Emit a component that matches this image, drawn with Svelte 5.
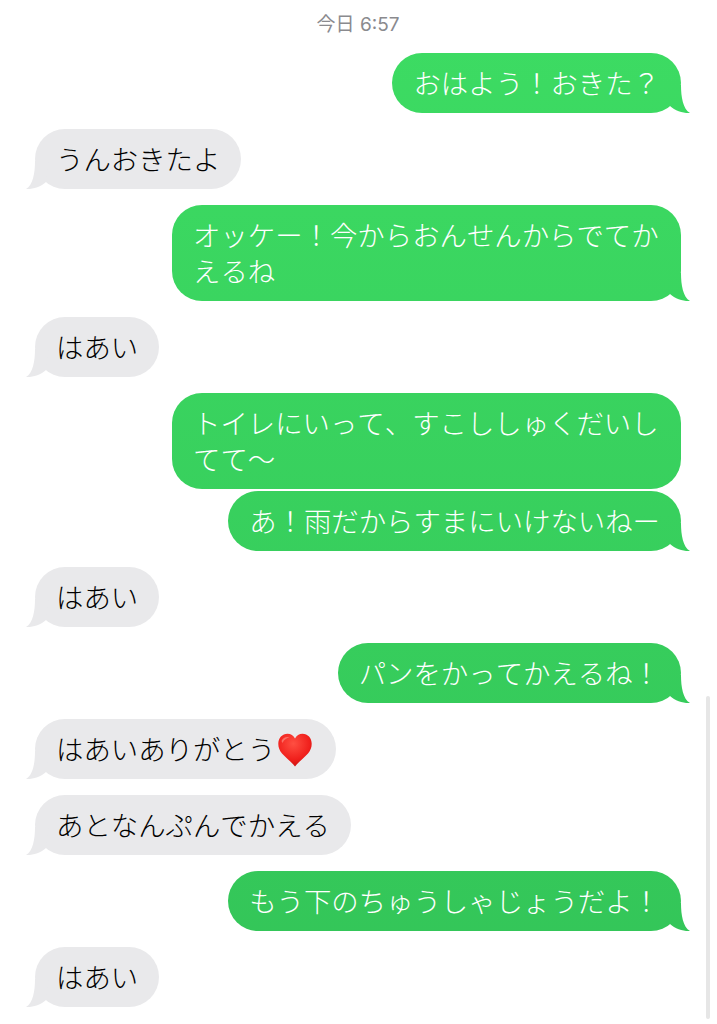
<script>
const messages = [
    { from: 'me', text: 'おはよう！おきた？' },
    { from: 'them', text: 'うんおきたよ' },
    { from: 'me', text: 'オッケー！今からおんせんからでてかえるね' },
    { from: 'them', text: 'はあい' },
    { from: 'me', text: 'トイレにいって、すこししゅくだいしてて〜', noTail: true },
    { from: 'me', text: 'あ！雨だからすまにいけないねー', tight: true },
    { from: 'them', text: 'はあい' },
    { from: 'me', text: 'パンをかってかえるね！' },
    { from: 'them', text: 'はあいありがとう', heart: true },
    { from: 'them', text: 'あとなんぷんでかえる' },
    { from: 'me', text: 'もう下のちゅうしゃじょうだよ！' },
    { from: 'them', text: 'はあい' }
];
</script>

<div class="thread" lang="ja">
    <div class="time">今日 6:57</div>

    {#each messages as msg}
        <div class="row {msg.from}" class:tight={msg.tight}>
            <div class="bubble" class:no-tail={msg.noTail}>
                {msg.text}{#if msg.heart}<svg class="heart" viewBox="0 0 34 34" aria-hidden="true">
                        <defs>
                            <radialGradient id="heartFill" cx="0.45" cy="0.3" r="0.75">
                                <stop offset="0" stop-color="#ff4f42" />
                                <stop offset="0.65" stop-color="#f0201c" />
                                <stop offset="1" stop-color="#c40f0f" />
                            </radialGradient>
                        </defs>
                        <path d="M17 33.5C14 29.5 8.5 25.5 4 20.5C1.5 17.5 0.3 14.5 0.3 10.8C0.3 5 4.3 0.8 9.5 0.8C12.8 0.8 15.5 2.6 17 5.6C18.5 2.6 21.2 0.8 24.5 0.8C29.7 0.8 33.7 5 33.7 10.8C33.7 14.5 32.5 17.5 30 20.5C25.5 25.5 20 29.5 17 33.5Z" fill="url(#heartFill)" />
                        <path d="M3.5 8C5 4.5 9 3 11.5 4.5C8.5 5 6 6.5 4.5 10Z" fill="#ff9a8e" opacity="0.6" />
                    </svg>{/if}
            </div>
        </div>
    {/each}

    <div class="scrollbar"></div>
</div>

<style>
:global(body) {
    background: #fff;
}

.thread {
    position: relative;
    height: 1024px;
    box-sizing: border-box;
    padding: 13px 36px 0 35px;
    overflow: hidden;
    font-family: "Noto Sans CJK JP", "Liberation Sans", sans-serif;
}

.time {
    height: 24px;
    line-height: 24px;
    text-align: center;
    font-family: Inter, "Noto Sans CJK JP", sans-serif;
    font-size: 19px;
    color: #8a8a8e;
}

.row {
    display: flex;
    margin-top: 16px;
}

.row.tight {
    margin-top: 2px;
}

.row.me {
    justify-content: flex-end;
}

.bubble {
    position: relative;
    box-sizing: border-box;
    max-width: 509px;
    padding: 11px 21px 13px;
    border-radius: 30px;
    font-size: 27.4px;
    font-weight: 300;
    line-height: 36px;
    font-kerning: none;
}

.me .bubble {
    color: #fff;
    background: linear-gradient(#3ddc63, #33c458) fixed;
}

.them .bubble {
    color: #000;
    background: #e9e9eb;
}

.bubble::after {
    content: "";
    position: absolute;
    bottom: 0;
    width: 25px;
    height: 30px;
    background: inherit;
    clip-path: path("M16 2C16 14 18 26 25 30C19 30.5 10 28 5 23L2 2Z");
}

.me .bubble::after {
    right: -9px;
}

.them .bubble::after {
    left: -9px;
    transform: scaleX(-1);
}

.bubble.no-tail::after {
    display: none;
}

.heart {
    display: inline-block;
    width: 34px;
    height: 34px;
    margin: 3px 3px -1px 3px;
    vertical-align: top;
}

.scrollbar {
    position: absolute;
    left: 706px;
    top: 696px;
    width: 4px;
    height: 323px;
    border-radius: 2px;
    background: #e6e6e6;
}
</style>
